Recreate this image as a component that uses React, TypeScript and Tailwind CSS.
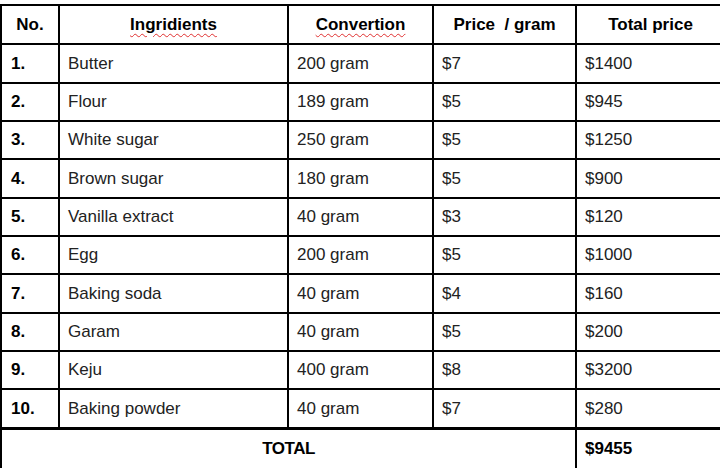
const rows = [
  ["1.", "Butter", "200 gram", "$7", "$1400"],
  ["2.", "Flour", "189 gram", "$5", "$945"],
  ["3.", "White sugar", "250 gram", "$5", "$1250"],
  ["4.", "Brown sugar", "180 gram", "$5", "$900"],
  ["5.", "Vanilla extract", "40 gram", "$3", "$120"],
  ["6.", "Egg", "200 gram", "$5", "$1000"],
  ["7.", "Baking soda", "40 gram", "$4", "$160"],
  ["8.", "Garam", "40 gram", "$5", "$200"],
  ["9.", "Keju", "400 gram", "$8", "$3200"],
  ["10.", "Baking powder", "40 gram", "$7", "$280"],
];

const cell = "border-2 border-black px-[8px] align-middle";

export default function App() {
  return (
    <div className="w-[720px] h-[468px] overflow-hidden bg-white pt-[4px] font-['Liberation_Sans',Arial,sans-serif] text-[17px] text-[#222]">
      <table className="w-[724px] table-fixed border-collapse border-l-2 border-black">
        <colgroup>
          <col className="w-[58px]" />
          <col className="w-[229px]" />
          <col className="w-[145px]" />
          <col className="w-[143px]" />
          <col className="w-[149px]" />
        </colgroup>
        <thead>
          <tr className="h-[39px] font-bold text-black">
            <th className={cell + " text-center"}>No.</th>
            <th className={cell + " text-center"}>
              <span className="underline decoration-wavy decoration-[#e03030] decoration-1 underline-offset-[3px]">Ingridients</span>
            </th>
            <th className={cell + " text-center"}>
              <span className="underline decoration-wavy decoration-[#e03030] decoration-1 underline-offset-[3px]">Convertion</span>
            </th>
            <th className={cell + " text-center"}>Price&nbsp; / gram</th>
            <th className={cell + " text-center"}>Total price</th>
          </tr>
        </thead>
        <tbody>
          {rows.map((r, i) => (
            <tr key={i} className={i % 3 === 0 ? "h-[39px]" : "h-[38px]"}>
              <td className={cell + " font-bold text-black pl-[9px]"}>{r[0]}</td>
              <td className={cell}>{r[1]}</td>
              <td className={cell}>{r[2]}</td>
              <td className={cell}>{r[3]}</td>
              <td className={cell}>{r[4]}</td>
            </tr>
          ))}
          <tr className="h-[40px] font-bold text-black">
            <td colSpan={4} className="border-2 border-t-[3px] border-b-0 border-black text-center tracking-[-0.5px]">TOTAL</td>
            <td className="border-2 border-t-[3px] border-b-0 border-black px-[8px]">$9455</td>
          </tr>
        </tbody>
      </table>
    </div>
  );
}
